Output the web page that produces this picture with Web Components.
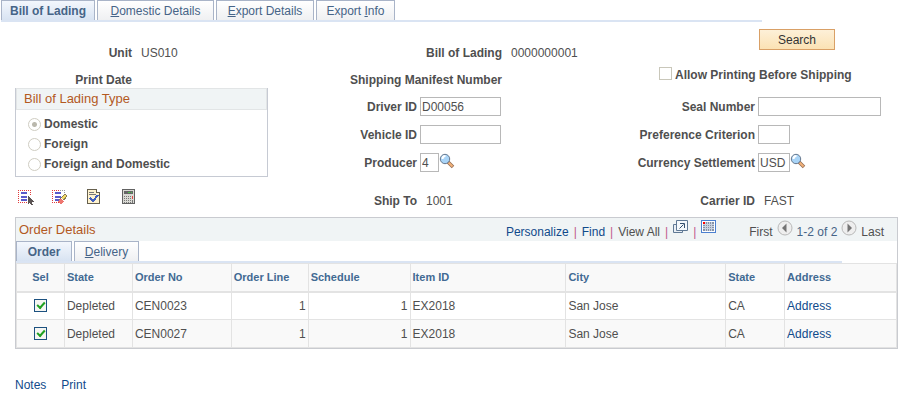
<!DOCTYPE html>
<html lang="en">
<head>
<meta charset="utf-8">
<title>Bill of Lading</title>
<style>
    body {
        margin: 0;
        background: #fff;
        color: #4f4f4f;
        font: 12px/16px "Liberation Sans", Arial, sans-serif;
    }
</style>
</head>
<body>
<lading-page></lading-page>

<script>
const icons = {
    select: `
        <svg width="16" height="16" viewBox="0 0 16 16" shape-rendering="crispEdges">
            <path d="M0 1.5h13M0 13.5h10" stroke="#e03c3c" stroke-dasharray="1 1"/>
            <path d="M.5 1v13M12.5 1v6" stroke="#e03c3c" stroke-dasharray="1 1"/>
            <path d="M3 4h6M3 7.500h6M3 11h6" stroke="#5a5acb" stroke-width="2"/>
            <path d="M10 7v8l2-2 1 3h2l-1-3h2z" fill="#5c5555"/>
        </svg>`,
    deselect: `
        <svg width="16" height="16" viewBox="0 0 16 16" shape-rendering="crispEdges">
            <path d="M0 1.5h8M0 13.5h7M.5 1v13" stroke="#e03c3c" stroke-dasharray="1 1"/>
            <path d="M8 1.5h6M12.5 3v2" stroke="#999" stroke-dasharray="1 1"/>
            <path d="M3 4h6M3 7.500h6M3 11h4" stroke="#5a5acb" stroke-width="2"/>
            <path d="M13 5l2 2-5 6-3-2z" fill="#f4dc6a" stroke="#8a7a50"/>
            <path d="M9 9l3 3-2 3H8l-2-2z" fill="#ee7670"/>
            <path d="M9 9l3 3" stroke="#fff"/>
        </svg>`,
    verify: `
        <svg width="16" height="16" viewBox="0 0 16 16" shape-rendering="crispEdges">
            <path d="M1.5.5h9l3 3v11h-12z" fill="#fff3cf" stroke="#66604e"/>
            <path d="M10.5.5v3h3" fill="#fff" stroke="#66604e"/>
            <path d="M3 3.5h5M3 5.5h7" stroke="#777"/>
            <path d="M4 9l3 3 5-6" fill="none" stroke="#4060c0" stroke-width="2"/>
        </svg>`,
    calculator: `
        <svg width="16" height="16" viewBox="0 0 16 16" shape-rendering="crispEdges">
            <path d="M2.5.5h12v14h-12z" fill="#dadad4" stroke="#626262"/>
            <path d="M4 2h9v3H4z" fill="#666"/>
            <path d="M8 3.5h4" stroke="#4cc04c" stroke-dasharray="2 1"/>
            <path d="M4 7.5h7M4 9.5h7M4 11.5h7M4 13h7" stroke="#777" stroke-dasharray="1 1"/>
            <path d="M12.5 7v3" stroke="#e04848"/>
            <path d="M12.5 11v3" stroke="#777"/>
        </svg>`,
    lookup: `
        <svg width="16" height="16" viewBox="0 0 16 16">
            <path d="M9 9l5 5" stroke="#956e55" stroke-width="3.500"/>
            <path d="M9.500 9.500l4 4" stroke="#f3b27a" stroke-width="2"/>
            <circle cx="6" cy="6" r="4.700" fill="#a9d4f7" stroke="#66788e"/>
            <path d="M3.500 6a3 3 0 0 1 3-3" stroke="#fff" stroke-width="2" fill="none"/>
        </svg>`,
    popout: `
        <svg width="15" height="14" viewBox="0 0 15 14">
            <path d="M3.500 4.500h-3v8h9v-2" fill="#e8eef4" stroke="#5f7894"/>
            <path d="M3.500.5h11v10h-11z" fill="#f4f8fb" stroke="#5f7894"/>
            <path d="M6.500 8.500l4-4M7 3.500h4.500V8" fill="none" stroke="#35506e"/>
        </svg>`,
    sheet: `
        <svg width="15" height="14" viewBox="0 0 15 14" shape-rendering="crispEdges">
            <path d="M.5.5h14v12H.5z" fill="#fff" stroke="#4c80d0"/>
            <path d="M2 2h11v9H2z" fill="#8792a6"/>
            <path d="M2 4.500h11M2 6.500h11M2 8.500h11M4.500 2v9M6.500 2v9M8.500 2v9M10.500 2v9" stroke="#c9d2e0"/>
            <path d="M2 2h2v2H2z" fill="#f00"/>
        </svg>`,
    previous: `
        <svg width="16" height="16" viewBox="0 0 16 16">
            <circle cx="8" cy="8" r="7" fill="#eee" stroke="#b9b9b9"/>
            <path d="M9.500 3.500v9L5 8z" fill="#747474"/>
        </svg>`,
    next: `
        <svg width="16" height="16" viewBox="0 0 16 16">
            <circle cx="8" cy="8" r="7" fill="#eee" stroke="#b9b9b9"/>
            <path d="M6.500 3.500v9L11 8z" fill="#747474"/>
        </svg>`
};

class IconButton extends HTMLElement {
    connectedCallback() {
        this.attachShadow({ mode: 'open' });
        this.shadowRoot.innerHTML = `
            <style>
                :host { display: block; }
                button {
                    display: block;
                    padding: 0;
                    border: 0;
                    background: none;
                    cursor: pointer;
                }
                svg { display: block; }
            </style>
            <button type="button" aria-label="${this.getAttribute('label')}">${icons[this.getAttribute('icon')]}</button>
        `;
    }
}

class ActionButton extends HTMLElement {
    connectedCallback() {
        this.attachShadow({ mode: 'open' });
        this.shadowRoot.innerHTML = `
            <style>
                :host { display: block; }
                button {
                    display: block;
                    box-sizing: border-box;
                    min-width: 76px;
                    height: 21px;
                    padding: 0 12px;
                    border: 1px solid #d9a066;
                    background: linear-gradient(#fdf0d8, #fbe2b4);
                    color: #333;
                    font: inherit;
                    cursor: pointer;
                }
            </style>
            <button type="button"><slot></slot></button>
        `;
    }
}

class TabStrip extends HTMLElement {
    connectedCallback() {
        this.attachShadow({ mode: 'open' });
        this.shadowRoot.innerHTML = `
            <style>
                :host { display: block; }
                nav {
                    display: flex;
                    align-items: flex-end;
                    gap: 2px;
                    border-bottom: 2px solid #dae4f3;
                }
            </style>
            <nav><slot></slot></nav>
        `;
    }
}

class TabItem extends HTMLElement {
    connectedCallback() {
        this.attachShadow({ mode: 'open' });
        this.shadowRoot.innerHTML = `
            <style>
                :host {
                    display: block;
                    box-sizing: border-box;
                    border: 1px solid #a9b4c8;
                    border-bottom: 0;
                    background: linear-gradient(#fff, #eff0f2);
                }
                :host([selected]) {
                    background: linear-gradient(#f3f7fd, #d8e3f2);
                    font-weight: bold;
                }
                a {
                    display: block;
                    padding: 2px 0 1px;
                    color: #466487;
                    text-align: center;
                    text-decoration: none;
                    white-space: nowrap;
                }
            </style>
            <a href="#"><slot></slot></a>
        `;
    }
}

class FormField extends HTMLElement {
    connectedCallback() {
        const type = this.getAttribute('type');
        const value = this.getAttribute('value') || '';
        const label = this.getAttribute('label');
        this.attachShadow({ mode: 'open' });
        this.shadowRoot.innerHTML = `
            <style>
                :host {
                    display: flex;
                    align-items: center;
                    gap: 3px;
                }
                label {
                    box-sizing: border-box;
                    width: var(--label-width);
                    font-weight: bold;
                    text-align: right;
                    white-space: nowrap;
                }
                output { padding-left: 6px; }
                input {
                    box-sizing: border-box;
                    width: var(--input-width);
                    height: 19px;
                    padding: 0 1px;
                    border: 1px solid #b8b8b8;
                    background: #fff;
                    color: inherit;
                    font: inherit;
                }
                ::slotted(icon-button) {
                    align-self: flex-start;
                    margin-left: -3px;
                }
            </style>
            <label for="field">${label}</label>
            ${type === 'text' ? `<input id="field" type="text" value="${value}">` : `<output id="field">${value}</output>`}
            <slot></slot>
        `;
    }
}

class CheckField extends HTMLElement {
    connectedCallback() {
        this.attachShadow({ mode: 'open' });
        this.shadowRoot.innerHTML = `
            <style>
                :host {
                    display: flex;
                    gap: 3px;
                    font-weight: bold;
                }
                input {
                    appearance: none;
                    box-sizing: border-box;
                    width: 13px;
                    height: 13px;
                    margin: 0;
                    border: 1px solid #c9c7ba;
                }
            </style>
            <input type="checkbox" id="box" disabled>
            <label for="box"><slot></slot></label>
        `;
    }
}

class RadioBox extends HTMLElement {
    connectedCallback() {
        const options = this.getAttribute('options').split(',');
        this.attachShadow({ mode: 'open' });
        this.shadowRoot.innerHTML = `
            <style>
                :host { display: block; }
                fieldset {
                    margin: 0;
                    padding: 0;
                    border: 1px solid #c6cad3;
                    border-top: 0;
                }
                legend {
                    float: left;
                    box-sizing: border-box;
                    width: 100%;
                    padding: 2px 7px;
                    border: 1px solid #e2e5e6;
                    background: #f0f4f5;
                    color: #b3591f;
                    font-size: 13px;
                    line-height: 16px;
                }
                .options {
                    clear: both;
                    padding: 4px 12px 2px;
                }
                .option {
                    display: flex;
                    align-items: center;
                    gap: 3px;
                    height: 20px;
                    font-weight: bold;
                }
                input {
                    appearance: none;
                    box-sizing: border-box;
                    width: 13px;
                    height: 13px;
                    margin: 0;
                    border: 1px solid #cfcdc2;
                    border-radius: 50%;
                }
                input:checked {
                    background: radial-gradient(#bab8ad 0 2px, #fff 3px);
                }
            </style>
            <fieldset>
                <legend>${this.getAttribute('heading')}</legend>
                <div class="options">
                    ${options.map((text, i) => `
                        <div class="option">
                            <input type="radio" name="type" id="type${i}" disabled ${i === 0 ? 'checked' : ''}>
                            <label for="type${i}">${text}</label>
                        </div>`).join('')}
                </div>
            </fieldset>
        `;
    }
}

class OrderGrid extends HTMLElement {
    connectedCallback() {
        const rows = [
            ['Depleted', 'CEN0023', 1, 1, 'EX2018', 'San Jose', 'CA'],
            ['Depleted', 'CEN0027', 1, 1, 'EX2018', 'San Jose', 'CA']
        ];
        const heads = ['Sel', 'State', 'Order No', 'Order Line', 'Schedule', 'Item ID', 'City', 'State', 'Address'];
        // column shares, relative to the full grid
        const widths = [48, 68, 99, 77, 102, 156, 160, 59, 112];
        const total = widths.reduce((a, b) => a + b);

        this.attachShadow({ mode: 'open' });
        this.shadowRoot.innerHTML = `
            <style>
                :host {
                    display: block;
                    border: 1px solid #c9cbd0;
                }
                header {
                    display: flex;
                    align-items: center;
                    height: 23px;
                    padding: 0 13px 0 3px;
                    background: #f0f4f5;
                }
                h2 {
                    flex: 1;
                    margin: 0;
                    color: #b3591f;
                    font-size: 13px;
                    font-weight: normal;
                }
                .tools, .pager {
                    display: flex;
                    align-items: center;
                    gap: 5px;
                    padding-top: 4px;
                }
                .tools { color: #c0588c; }
                .pager {
                    gap: 4px;
                    margin-left: 33px;
                }
                .pager b {
                    color: #466487;
                    font-weight: normal;
                }
                icon-button {
                    align-self: flex-start;
                    margin-top: -4px;
                }
                a {
                    color: #104a8b;
                    text-decoration: none;
                }
                .plain { color: #4f4f4f; }
                tab-strip { margin-right: 55px; }
                .order { width: 56px; }
                .delivery { width: 65px; }
                table {
                    width: 100%;
                    table-layout: fixed;
                    border-collapse: collapse;
                }
                th, td {
                    box-sizing: border-box;
                    padding: 0 2px;
                    border: 1px solid #e3e3e3;
                    text-align: left;
                    white-space: nowrap;
                }
                th {
                    height: 28px;
                    border-bottom-width: 2px;
                    background: #f9f9f9;
                    color: #426a93;
                    font-size: 11px;
                }
                td { height: 28px; }
                tr:nth-child(even) td { background: #f9f9f9; }
                .center { text-align: center; }
                .number { text-align: right; }
                input {
                    appearance: none;
                    display: block;
                    box-sizing: border-box;
                    width: 13px;
                    height: 13px;
                    margin: 0 auto;
                    border: 1px solid #1c5180;
                    background: #f6f6f3;
                }
                input:checked::before {
                    content: "";
                    display: block;
                    box-sizing: border-box;
                    width: 8px;
                    height: 5px;
                    margin: 2px 0 0 2px;
                    border: solid #21a121;
                    border-width: 0 0 2px 2px;
                    transform: rotate(-48deg);
                }
            </style>
            <header>
                <h2>Order Details</h2>
                <div class="tools">
                    <a href="#">Personalize</a>|<a href="#">Find</a>|<a href="#" class="plain">View All</a>|
                    <icon-button icon="popout" label="Zoom"></icon-button>|
                    <icon-button icon="sheet" label="Download"></icon-button>
                </div>
                <div class="pager">
                    <span>First</span>
                    <icon-button icon="previous" label="Previous"></icon-button>
                    <b>1-2 of 2</b>
                    <icon-button icon="next" label="Next"></icon-button>
                    <span>Last</span>
                </div>
            </header>
            <tab-strip>
                <tab-item class="order" selected>Order</tab-item>
                <tab-item class="delivery"><u>D</u>elivery</tab-item>
            </tab-strip>
            <table>
                <colgroup>${widths.map(w => `<col style="width: ${(w / total * 100).toFixed(2)}%">`).join('')}</colgroup>
                <thead>
                    <tr>${heads.map((h, i) => `<th scope="col" class="${i === 0 ? 'center' : ''}">${h}</th>`).join('')}</tr>
                </thead>
                <tbody>
                    ${rows.map(row => `
                        <tr>
                            <td><input type="checkbox" checked aria-label="Select ${row[1]}"></td>
                            ${row.map(cell => `<td class="${typeof cell === 'number' ? 'number' : ''}">${cell}</td>`).join('')}
                            <td><a href="#">Address</a></td>
                        </tr>`).join('')}
                </tbody>
            </table>
        `;
    }
}

class LadingPage extends HTMLElement {
    connectedCallback() {
        this.attachShadow({ mode: 'open' });
        this.shadowRoot.innerHTML = `
            <style>
                :host { display: block; }
                .page-tabs { margin: 0 153px 0 1px; }
                .w1 { width: 94px; }
                .w2 { width: 117px; }
                .w3 { width: 98px; }
                .w4 { width: 79px; }
                main { padding: 0 17px 0 15px; }
                .form {
                    display: grid;
                    grid-template-columns: 315fr 290fr 278fr;
                    margin-bottom: 8px;
                }
                .column {
                    display: flex;
                    flex-direction: column;
                    padding-top: 23px;
                }
                .left { --label-width: 117px; }
                .middle { --label-width: 87px; --input-width: 81px; }
                .right { --label-width: 135px; --input-width: 32px; padding-top: 7px; }
                .heading {
                    display: flex;
                    flex-direction: column;
                    gap: 11px;
                }
                .wide { --label-width: 172px; }
                .inputs {
                    display: flex;
                    flex-direction: column;
                    gap: 9px;
                    margin: 9px 0 21px;
                }
                .short { --input-width: 19px; }
                .long { --input-width: 123px; }
                radio-box { margin-right: 62px; }
                .toolbar {
                    display: flex;
                    gap: 18px;
                    padding: 12px 3px 0;
                }
                action-button { margin-left: 139px; }
                check-field { margin: 17px 0 5px 39px; }
                footer {
                    display: flex;
                    gap: 15px;
                    padding-top: 28px;
                }
                footer a {
                    color: #104a8b;
                    text-decoration: none;
                }
            </style>
            <tab-strip class="page-tabs">
                <tab-item class="w1" selected>Bill of Lading</tab-item>
                <tab-item class="w2"><u>D</u>omestic Details</tab-item>
                <tab-item class="w3"><u>E</u>xport Details</tab-item>
                <tab-item class="w4">Export <u>I</u>nfo</tab-item>
            </tab-strip>
            <main>
                <div class="form">
                    <div class="column left">
                        <div class="heading">
                            <form-field label="Unit" value="US010"></form-field>
                            <form-field label="Print Date"></form-field>
                        </div>
                        <radio-box heading="Bill of Lading Type" options="Domestic,Foreign,Foreign and Domestic"></radio-box>
                        <div class="toolbar">
                            <icon-button icon="select" label="Select all"></icon-button>
                            <icon-button icon="deselect" label="Clear all"></icon-button>
                            <icon-button icon="verify" label="Verify"></icon-button>
                            <icon-button icon="calculator" label="Calculate"></icon-button>
                        </div>
                    </div>
                    <div class="column middle">
                        <div class="heading wide">
                            <form-field label="Bill of Lading" value="0000000001"></form-field>
                            <form-field label="Shipping Manifest Number"></form-field>
                        </div>
                        <div class="inputs">
                            <form-field type="text" label="Driver ID" value="D00056"></form-field>
                            <form-field type="text" label="Vehicle ID"></form-field>
                            <form-field type="text" class="short" label="Producer" value="4">
                                <icon-button icon="lookup" label="Look up producer"></icon-button>
                            </form-field>
                        </div>
                        <form-field label="Ship To" value="1001"></form-field>
                    </div>
                    <div class="column right">
                        <action-button>Search</action-button>
                        <check-field>Allow Printing Before Shipping</check-field>
                        <div class="inputs">
                            <form-field type="text" class="long" label="Seal Number"></form-field>
                            <form-field type="text" label="Preference Criterion"></form-field>
                            <form-field type="text" label="Currency Settlement" value="USD">
                                <icon-button icon="lookup" label="Look up currency"></icon-button>
                            </form-field>
                        </div>
                        <form-field label="Carrier ID" value="FAST"></form-field>
                    </div>
                </div>
                <order-grid></order-grid>
                <footer>
                    <a href="#">Notes</a>
                    <a href="#">Print</a>
                </footer>
            </main>
        `;
    }
}

customElements.define('icon-button', IconButton);
customElements.define('action-button', ActionButton);
customElements.define('tab-strip', TabStrip);
customElements.define('tab-item', TabItem);
customElements.define('form-field', FormField);
customElements.define('check-field', CheckField);
customElements.define('radio-box', RadioBox);
customElements.define('order-grid', OrderGrid);
customElements.define('lading-page', LadingPage);
</script>
</body>
</html>
